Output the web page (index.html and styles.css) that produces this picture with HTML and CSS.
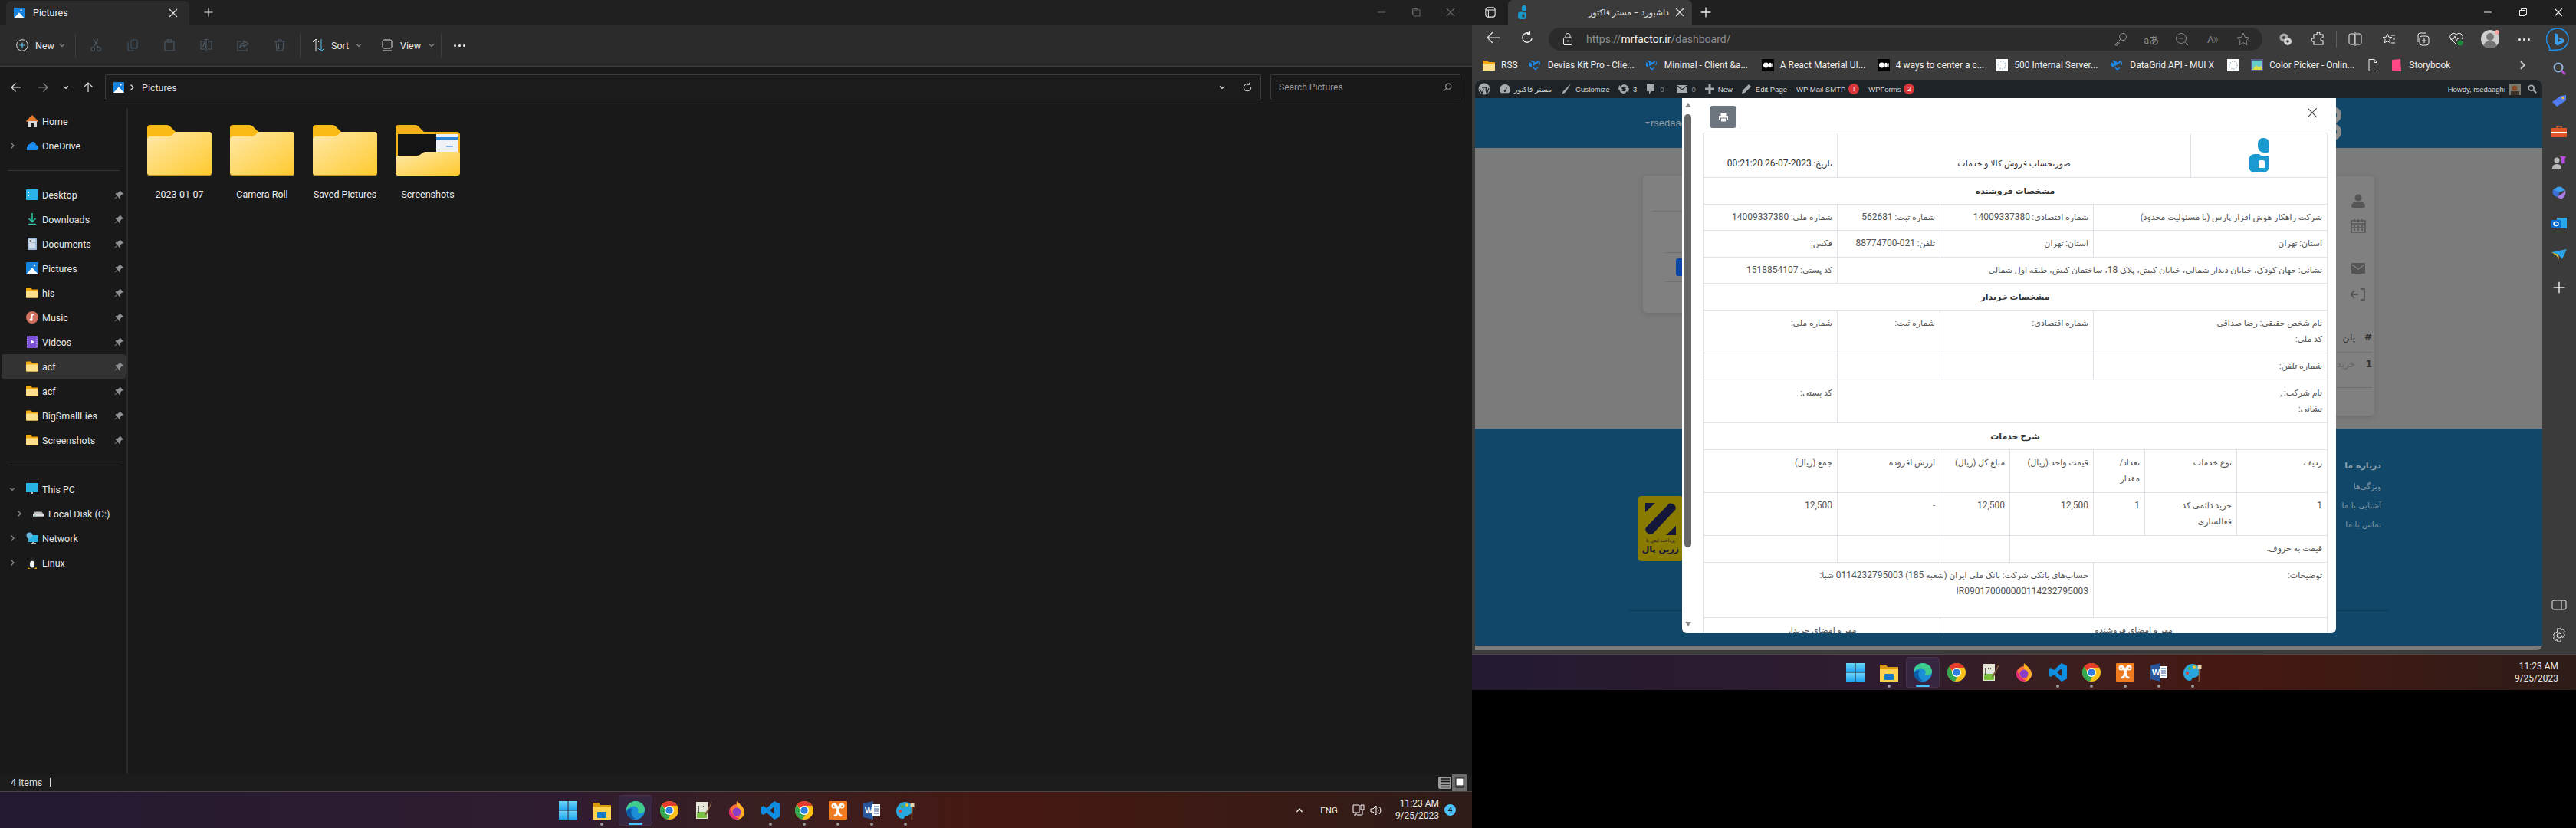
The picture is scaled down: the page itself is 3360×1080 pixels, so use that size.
FILE: index.html
```html
<!DOCTYPE html>
<html lang="en">
<head>
<meta charset="utf-8">
<title>Desktop</title>
<link rel="stylesheet" href="styles.css">
</head>
<body>
<svg class="defs" aria-hidden="true">
  <defs>
    <linearGradient id="gf" x1="0" y1="0" x2="1" y2="1"><stop offset="0" stop-color="#ffe9a8"/><stop offset="1" stop-color="#ffc92e"/></linearGradient>
    <linearGradient id="gs" x1="0" y1="0" x2="0" y2="1"><stop offset="0" stop-color="#6fd6fb"/><stop offset="1" stop-color="#1fa5ee"/></linearGradient>
    <symbol id="folderbig" viewBox="0 0 84 66">
      <path d="M4 0h21q3 0 5 2l7 7h43q4 0 4 4v49q0 4-4 4H4q-4 0-4-4V4q0-4 4-4z" fill="#fbbb17"/>
      <path d="M4 15h24q3 0 5-2l4-4h43q4 0 4 4v49q0 4-4 4H4q-4 0-4-4V19q0-4 4-4z" fill="url(#gf)"/>
      <path d="M0 63q0 3 4 3h76q4 0 4-3v-1q0 3-4 3H4q-4 0-4-3z" fill="#c8962a"/>
    </symbol>
    <symbol id="foldershot" viewBox="0 0 84 66">
      <path d="M4 0h21q3 0 5 2l7 7h43q4 0 4 4v49q0 4-4 4H4q-4 0-4-4V4q0-4 4-4z" fill="#f3b21a"/>
      <rect x="3" y="12" width="78" height="30" fill="#141414"/>
      <rect x="53" y="12" width="28" height="30" fill="#eef2f7"/>
      <rect x="53" y="16" width="28" height="3" fill="#2b88d8"/>
      <rect x="66" y="27" width="9" height="2" fill="#8fb4e0"/>
      <path d="M4 40h24q3 0 5-2l3-2q1-1 3-1h41q4 0 4 4v23q0 4-4 4H4q-4 0-4-4V44q0-4 4-4z" fill="url(#gf)"/>
    </symbol>
    <symbol id="foldersm" viewBox="0 0 16 13">
      <path d="M1 0h5l2 2h7q1 0 1 1v9q0 1-1 1H1q-1 0-1-1V1q0-1 1-1z" fill="#f2a90f"/>
      <path d="M0 4h16v8q0 1-1 1H1q-1 0-1-1z" fill="#ffe08a"/>
    </symbol>
    <symbol id="pic" viewBox="0 0 16 16">
      <rect width="16" height="16" rx="1" fill="#1583dd"/>
      <path d="M0 16L8 7l8 9z" fill="#fff"/><circle cx="11" cy="4" r="1.300" fill="#fff"/>
    </symbol>
    <symbol id="pin" viewBox="0 0 12 12">
      <path d="M7 0l5 5-1 1-1-.5L8 8l-.3 2-1 1-2.200-3L1 11.500 0.500 11 4 7.500 1.500 5l1-1 2-.2L7 1.500z" fill="#8a8f94"/>
    </symbol>
    <symbol id="chev" viewBox="0 0 10 10"><path d="M2 3.500l3 3 3-3" fill="none" stroke="currentColor" stroke-width="1.200"/></symbol>
    <symbol id="chr" viewBox="0 0 10 10"><path d="M3.500 1.500l3.500 3.500-3.500 3.500" fill="none" stroke="currentColor" stroke-width="1.300"/></symbol>
    <symbol id="x" viewBox="0 0 12 12"><path d="M1 1l10 10M11 1L1 11" stroke="currentColor" stroke-width="1.100"/></symbol>
    <symbol id="plus" viewBox="0 0 12 12"><path d="M6 .5v11M.5 6h11" stroke="currentColor" stroke-width="1.100"/></symbol>
    <symbol id="search" viewBox="0 0 14 14"><circle cx="8.500" cy="5.500" r="4.200" fill="none" stroke="currentColor" stroke-width="1.200"/><path d="M5.500 8.500L1 13" stroke="currentColor" stroke-width="1.300"/></symbol>
    <symbol id="refresh" viewBox="0 0 16 16"><path d="M13.500 8A5.500 5.500 0 1 1 11 3.400M11 .8v3h-3" fill="none" stroke="currentColor" stroke-width="1.200"/></symbol>
    <symbol id="start" viewBox="0 0 24 24"><rect width="11.500" height="11.500" fill="url(#gs)"/><rect x="12.500" width="11.500" height="11.500" fill="url(#gs)"/><rect y="12.500" width="11.500" height="11.500" fill="url(#gs)"/><rect x="12.500" y="12.500" width="11.500" height="11.500" fill="url(#gs)"/></symbol>
    <symbol id="texp" viewBox="0 0 24 24"><path d="M0 2h8l2 3h14v18H0z" fill="#d99a0f"/><path d="M0 7h24v17H0z" fill="#ffd24d"/><rect x="6" y="14" width="12" height="8" rx="1" fill="#1679c9"/></symbol>
    <symbol id="tedge" viewBox="0 0 24 24"><circle cx="12" cy="12" r="12" fill="#1a8fd8"/><path d="M0 12C0 5 5 0 12 0c7 0 12 5 12 11 0 3-3 5-6 5-2 0-3-1-3-2 1-1 1-3 0-4.500C13 7 10 6 7 7c-3 1-6 3-7 5z" fill="#3fcb8d"/><path d="M8 10c-3 3-2 10 4 13-6 1-11-3-12-9 1-3 4-5 8-4z" fill="#0c5aa6"/></symbol>
    <symbol id="tchrome" viewBox="0 0 24 24"><circle cx="12" cy="12" r="12" fill="#fbc116"/><path d="M12 0a12 12 0 0 1 10.400 6H12a6 6 0 0 0-5.600 3.800L2.600 4.500A12 12 0 0 1 12 0z" fill="#e33b2e"/><path d="M2.600 4.500l4.800 8.800a6 6 0 0 0 6 4.500L9.800 23.800A12 12 0 0 1 2.600 4.500z" fill="#2fa84f"/><circle cx="12" cy="12" r="6" fill="#fff"/><circle cx="12" cy="12" r="4.700" fill="#2f7de1"/></symbol>
    <symbol id="tnote" viewBox="0 0 24 24"><rect x="3" y="1" width="15" height="22" fill="#e6e6d8"/><rect x="4" y="14" width="13" height="8" fill="#7cc242"/><path d="M6 6v10M9 7h1M12 7h1" stroke="#333" stroke-width="1.500"/><path d="M23 1l-8 15-1 3 3-2 7-15z" fill="#7a5a3a"/></symbol>
    <symbol id="tfox" viewBox="0 0 24 24"><circle cx="12" cy="14" r="10" fill="#ff7139"/><path d="M12 0c3 3 9 7 10 14 0 6-5 10-10 10 5-2 6-8 3-12-2-3-4-6-3-12z" fill="#ffb020"/><circle cx="12" cy="14" r="5.500" fill="#8a3fc8"/><path d="M3 8c1 6 4 12 12 15-5 2-13-1-13-9z" fill="#e02878"/></symbol>
    <symbol id="tcode" viewBox="0 0 24 24"><path d="M17 0l7 3.500v17L17 24 7 15l-4 3-3-1.500v-9L3 6l4 3zM17 7l-6 5 6 5z" fill="#0f8de0"/></symbol>
    <symbol id="txampp" viewBox="0 0 24 24"><rect width="24" height="24" rx="1" fill="#f07a1e"/><path d="M7 6c3-3 4 3 5 6s2 9 5 6M17 6c-3-3-4 3-5 6s-2 9-5 6" fill="none" stroke="#fff" stroke-width="3"/><circle cx="7" cy="6" r="2.500" fill="none" stroke="#fff" stroke-width="2"/><circle cx="17" cy="6" r="2.500" fill="none" stroke="#fff" stroke-width="2"/></symbol>
    <symbol id="tpaint" viewBox="0 0 24 24"><path d="M12 1C5 1 0 7 0 13s4 10 8 10 2-4 5-4 8-2 8-8-4-10-9-10z" fill="#26a8de"/><circle cx="5" cy="13" r="2" fill="#d9442f"/><circle cx="8" cy="7" r="2" fill="#4cae3b"/><circle cx="14" cy="5" r="2" fill="#f1c232"/><path d="M20 4l2 .5L21 24h-1.500z" fill="#8a5a2a"/><rect x="18.500" y="3" width="5" height="5" fill="#e5d2a8"/></symbol>
    <symbol id="mui" viewBox="0 0 16 16"><path d="M0 2l4 2.500v5L8 7l4-2.500V2L8 4.500 4 2zM0 4v5l3 2V6zM14 2v5l-2 1.500zM11 9v3l-3 2.500-3-2v-2l3 2 3-2z" fill="#1e88e5"/></symbol>
    <symbol id="med" viewBox="0 0 16 16"><rect width="16" height="16" rx="1" fill="#000"/><circle cx="5.500" cy="8" r="3.500" fill="#fff"/><ellipse cx="11" cy="8" rx="1.800" ry="3.300" fill="#fff"/><ellipse cx="14" cy="8" rx=".7" ry="3" fill="#fff"/></symbol>
    <symbol id="spin" viewBox="0 0 16 16"><rect width="16" height="16" fill="#fff"/><circle cx="8" cy="8" r="5" fill="none" stroke="#a9c4d6" stroke-width="1.500" stroke-dasharray="1.500 1.500"/></symbol>
    <symbol id="logo" viewBox="0 0 27 45"><path d="M20 0a7 7 0 0 1 7 7v9a3 3 0 0 1-3 3h-4a8 8 0 0 1-8-8V7a7 7 0 0 1 8-7z" fill="#1b9ad2"/><path fill-rule="evenodd" d="M8 21h5a4 4 0 0 1 3 2h8a3 3 0 0 1 3 3v11a8 8 0 0 1-8 8H8a8 8 0 0 1-8-8V29a8 8 0 0 1 8-8zM15 29a2 2 0 0 0-2 2v8h8v-8a2 2 0 0 0-2-2z" fill="#1b9ad2"/></symbol>
  </defs>
</svg>

<div class="screen">

  <!-- ============ LEFT MONITOR ============ -->
  <section class="monitor mon-left">
    <div class="explorer">
      <header class="ex-title">
        <div class="ex-tab">
          <svg class="i14"><use href="#pic"/></svg>
          <span class="ex-tab-name">Pictures</span>
          <svg class="i12 ml-auto"><use href="#x"/></svg>
        </div>
        <svg class="i12 ex-newtab"><use href="#plus"/></svg>
        <div class="winctl winctl-dim">
          <svg class="i12" viewBox="0 0 12 12"><path d="M1 6h10" stroke="currentColor"/></svg>
          <svg class="i12" viewBox="0 0 12 12"><path d="M3 3h8v8H3zM1.500 9V1.500H9" fill="none" stroke="currentColor"/></svg>
          <svg class="i12"><use href="#x"/></svg>
        </div>
      </header>

      <div class="ex-tools">
        <div class="tool tool-new">
          <svg class="i16" viewBox="0 0 16 16"><circle cx="8" cy="8" r="7.300" fill="none" stroke="#ddd"/><path d="M8 4.500v7M4.500 8h7" stroke="#5cc4f5" stroke-width="1.200"/></svg>
          <span>New</span><svg class="i10 dim"><use href="#chev"/></svg>
        </div>
        <i class="tool-sep"></i>
        <div class="tool-icons">
          <svg class="i16" viewBox="0 0 16 16"><g fill="none" stroke="#4c5b68" stroke-width="1.100"><circle cx="4" cy="13" r="2.500"/><circle cx="12" cy="13" r="2.500"/><path d="M5 11L11 0M11 11L5 0"/></g></svg>
          <svg class="i16" viewBox="0 0 16 16"><g fill="none" stroke="#3f5668" stroke-width="1.100"><rect x="6" y="1" width="8" height="11" rx="2"/><path d="M3 5H2v9q0 1 1 1h6v-1"/></g></svg>
          <svg class="i16" viewBox="0 0 16 16"><g fill="none" stroke="#4c5b68" stroke-width="1.100"><path d="M4 3H2v12h12V3h-2"/><rect x="5" y="1" width="6" height="3"/></g></svg>
          <svg class="i16" viewBox="0 0 16 16"><g fill="none" stroke="#4c5b68" stroke-width="1.100"><path d="M6 3H1v10h5M10 3h5v10h-5M8 0v16M5.500 .5h5M5.500 15.500h5M3.500 10l2-5 2 5"/></g></svg>
          <svg class="i16" viewBox="0 0 16 16"><g fill="none" stroke="#4c5b68" stroke-width="1.100"><path d="M6 3H1v12h12v-3"/><path d="M9 2l6 4-6 4V8Q5 8 4 12 4 5 9 5z"/></g></svg>
          <svg class="i16" viewBox="0 0 16 16"><g fill="none" stroke="#4c5b68" stroke-width="1.100"><path d="M1 3h14M6 3V1h4v2M3 3l1 12h8l1-12M6.500 6v7M9.500 6v7"/></g></svg>
        </div>
        <i class="tool-sep"></i>
        <div class="tool tool-sort">
          <svg class="i17" viewBox="0 0 17 18"><path d="M5 17V1M1 5l4-4 4 4" fill="none" stroke="#ddd"/><path d="M12 1v16M8 13l4 4 4-4" fill="none" stroke="#5cc4f5"/></svg>
          <span>Sort</span><svg class="i10 dim"><use href="#chev"/></svg>
        </div>
        <div class="tool tool-view">
          <svg class="i16" viewBox="0 0 16 16"><rect x="2" y="1" width="12" height="11" rx="2" fill="none" stroke="#ddd"/><path d="M2 15h12" stroke="#ddd"/></svg>
          <span>View</span><svg class="i10 dim"><use href="#chev"/></svg>
        </div>
        <i class="tool-sep"></i>
        <div class="tool-more"><i></i><i></i><i></i></div>
      </div>

      <div class="ex-addr">
        <div class="ex-nav">
          <svg class="i14" viewBox="0 0 14 14"><path d="M13 7H1M6.500 1.500L1 7l5.500 5.500" fill="none" stroke="#ddd" stroke-width="1.200"/></svg>
          <svg class="i14 dim" viewBox="0 0 14 14"><path d="M1 7h12M7.500 1.500L13 7l-5.500 5.500" fill="none" stroke="currentColor" stroke-width="1.200"/></svg>
          <svg class="i10"><use href="#chev"/></svg>
          <svg class="i14" viewBox="0 0 14 14"><path d="M7 13V1M1.500 6.500L7 1l5.500 5.500" fill="none" stroke="#ddd" stroke-width="1.200"/></svg>
        </div>
        <div class="ex-path">
          <svg class="i14"><use href="#pic"/></svg>
          <svg class="i10"><use href="#chr"/></svg>
          <span>Pictures</span>
          <svg class="i10 ml-auto"><use href="#chev"/></svg>
          <svg class="i14 path-refresh"><use href="#refresh"/></svg>
        </div>
        <div class="ex-search">
          <span>Search Pictures</span>
          <svg class="i12 ml-auto"><use href="#search"/></svg>
        </div>
      </div>

      <div class="ex-body">
        <nav class="ex-side">
          <div class="nv"><span class="nv-chev"></span>
            <svg class="nv-ic" viewBox="0 0 16 16"><path d="M8 0l8 8-1 1H1L0 8z" fill="#e8782a"/><path d="M2 8h12v8h-4v-5H6v5H2z" fill="#d8d8d8"/></svg><span>Home</span></div>
          <div class="nv"><span class="nv-chev"><svg class="i10 dim"><use href="#chr"/></svg></span>
            <svg class="nv-ic" viewBox="0 0 16 16"><path d="M1 14q-1-3 1-5 0-3 3-3 1-3 4-3t4 4q3 1 3 4t-3 3z" fill="#1a8cf0"/></svg><span>OneDrive</span></div>
          <hr class="nv-sep">
          <div class="nv"><span class="nv-chev"></span>
            <svg class="nv-ic" viewBox="0 0 16 16"><rect y="1" width="16" height="14" rx="1" fill="#2ab3e8"/><path d="M2 4h2v2H2zM2 8h2v2H2z" fill="#fff"/></svg><span>Desktop</span><svg class="nv-pin"><use href="#pin"/></svg></div>
          <div class="nv"><span class="nv-chev"></span>
            <svg class="nv-ic" viewBox="0 0 16 16"><path d="M8 0v11M3.500 7L8 11.500 12.500 7" fill="none" stroke="#2cc7a8" stroke-width="1.500"/><path d="M3 14.500h10" stroke="#2cc7a8" stroke-width="1.500"/></svg><span>Downloads</span><svg class="nv-pin"><use href="#pin"/></svg></div>
          <div class="nv"><span class="nv-chev"></span>
            <svg class="nv-ic" viewBox="0 0 16 16"><rect x="2" width="12" height="16" rx="1" fill="#a5bcd6"/><path d="M4 3h3v3H4zM8 3h4M8 5h4M4 8h8M4 10h8M4 12h8" stroke="#fff"/></svg><span>Documents</span><svg class="nv-pin"><use href="#pin"/></svg></div>
          <div class="nv"><span class="nv-chev"></span><svg class="nv-ic"><use href="#pic"/></svg><span>Pictures</span><svg class="nv-pin"><use href="#pin"/></svg></div>
          <div class="nv"><span class="nv-chev"></span><svg class="nv-ic"><use href="#foldersm"/></svg><span>his</span><svg class="nv-pin"><use href="#pin"/></svg></div>
          <div class="nv"><span class="nv-chev"></span>
            <svg class="nv-ic" viewBox="0 0 16 16"><circle cx="8" cy="8" r="8" fill="#d2705f"/><path d="M7 11V4l4-1v2L8.500 5.600V11a2 1.600 0 1 1-1.500-1.500z" fill="#fff"/></svg><span>Music</span><svg class="nv-pin"><use href="#pin"/></svg></div>
          <div class="nv"><span class="nv-chev"></span>
            <svg class="nv-ic" viewBox="0 0 16 16"><rect x="1" width="14" height="16" fill="#7b4fd6"/><path d="M6 5l5 3-5 3z" fill="#fff"/><path d="M2 1v14M14 1v14" stroke="#d5c6f5" stroke-dasharray="1.500 1.500"/></svg><span>Videos</span><svg class="nv-pin"><use href="#pin"/></svg></div>
          <div class="nv nv-on"><span class="nv-chev"></span><svg class="nv-ic"><use href="#foldersm"/></svg><span>acf</span><svg class="nv-pin"><use href="#pin"/></svg></div>
          <div class="nv"><span class="nv-chev"></span><svg class="nv-ic"><use href="#foldersm"/></svg><span>acf</span><svg class="nv-pin"><use href="#pin"/></svg></div>
          <div class="nv"><span class="nv-chev"></span><svg class="nv-ic"><use href="#foldersm"/></svg><span>BigSmallLies</span><svg class="nv-pin"><use href="#pin"/></svg></div>
          <div class="nv"><span class="nv-chev"></span><svg class="nv-ic"><use href="#foldersm"/></svg><span>Screenshots</span><svg class="nv-pin"><use href="#pin"/></svg></div>
          <hr class="nv-sep">
          <div class="nv"><span class="nv-chev"><svg class="i10 dim"><use href="#chev"/></svg></span>
            <svg class="nv-ic" viewBox="0 0 16 16"><rect width="16" height="12" fill="#27b3e3"/><path d="M7 12h2v2h3v1H4v-1h3z" fill="#bbb"/></svg><span>This PC</span></div>
          <div class="nv nv-sub"><span class="nv-chev"><svg class="i10 dim"><use href="#chr"/></svg></span>
            <svg class="nv-ic" viewBox="0 0 16 16"><path d="M3 5h10l3 4v3H0V9z" fill="#bdbdbd"/><rect y="9" width="16" height="3" fill="#e0e0e0"/><rect x="2" y="10" width="2" height="1" fill="#3c9"/></svg><span>Local Disk (C:)</span></div>
          <div class="nv"><span class="nv-chev"><svg class="i10 dim"><use href="#chr"/></svg></span>
            <svg class="nv-ic" viewBox="0 0 16 16"><rect x="3" y="4" width="13" height="9" fill="#27b3e3"/><path d="M8 13h3v1h2v1H6v-1h2z" fill="#bbb"/><circle cx="4.500" cy="4.500" r="4" fill="#6bb4dc"/></svg><span>Network</span></div>
          <div class="nv"><span class="nv-chev"><svg class="i10 dim"><use href="#chr"/></svg></span>
            <svg class="nv-ic" viewBox="0 0 16 16"><ellipse cx="8" cy="9" rx="4.500" ry="6" fill="#222"/><ellipse cx="8" cy="10" rx="3" ry="4.500" fill="#f4f4f4"/><circle cx="8" cy="3" r="2.500" fill="#222"/><path d="M2 14l4 2H2zM14 14l-4 2h4z" fill="#eea80f"/></svg><span>Linux</span></div>
        </nav>
        <main class="ex-files">
          <figure class="file"><svg class="folder"><use href="#folderbig"/></svg><figcaption>2023-01-07</figcaption></figure>
          <figure class="file"><svg class="folder"><use href="#folderbig"/></svg><figcaption>Camera Roll</figcaption></figure>
          <figure class="file"><svg class="folder"><use href="#folderbig"/></svg><figcaption>Saved Pictures</figcaption></figure>
          <figure class="file"><svg class="folder"><use href="#foldershot"/></svg><figcaption>Screenshots</figcaption></figure>
        </main>
      </div>

      <footer class="ex-status">
        <span>4 items</span><i class="status-bar"></i>
        <div class="view-toggle">
          <span class="vt"><svg class="i14" viewBox="0 0 14 14"><path d="M1 2h12M1 5.500h12M1 9h12M1 12.500h12" stroke="#111" stroke-width="1.400"/></svg></span>
          <span class="vt vt-on"><svg class="i14" viewBox="0 0 14 14"><rect x="2" y="1" width="10" height="10" fill="#fff" stroke="#111"/><path d="M2 13h10" stroke="#111"/></svg></span>
        </div>
      </footer>
    </div>

    <div class="taskbar tb-left">
      <div class="tb-apps">
        <span class="app"><svg class="i24"><use href="#start"/></svg></span>
        <span class="app run"><svg class="i24"><use href="#texp"/></svg></span>
        <span class="app active"><svg class="i24"><use href="#tedge"/></svg></span>
        <span class="app"><svg class="i24"><use href="#tchrome"/></svg></span>
        <span class="app"><svg class="i24"><use href="#tnote"/></svg></span>
        <span class="app"><svg class="i24"><use href="#tfox"/></svg></span>
        <span class="app run"><svg class="i24"><use href="#tcode"/></svg></span>
        <span class="app run"><svg class="i24"><use href="#tchrome"/></svg></span>
        <span class="app run"><svg class="i24"><use href="#txampp"/></svg></span>
        <span class="app run"><svg class="i24" viewBox="0 0 24 24"><path d="M1 3l13-3v24L1 21z" fill="#2b579a"/><rect x="13" y="4" width="10" height="16" fill="#fff"/><path d="M15 7h6M15 10h6M15 13h6M15 16h6" stroke="#2b579a"/><text x="3" y="16" class="word-w">W</text></svg></span>
        <span class="app run"><svg class="i24"><use href="#tpaint"/></svg></span>
      </div>
      <div class="tray">
        <svg class="i10 tray-up" viewBox="0 0 10 10"><path d="M1.500 7L5 3l3.500 4" fill="none" stroke="#fff" stroke-width="1.200"/></svg>
        <span class="tray-lang">ENG</span>
        <svg class="i16" viewBox="0 0 16 16"><path d="M1 1h8v10H1zM5 11v3H2M11 1h4v6h-4zM13 7v7H6" fill="none" stroke="#fff"/></svg>
        <svg class="i16 tray-vol" viewBox="0 0 16 16"><path d="M1 6h3l4-4v12l-4-4H1zM10 5q2 3 0 6M12 3q4 5 0 10" fill="none" stroke="#fff"/></svg>
        <div class="clock"><span>11:23 AM</span><span>9/25/2023</span></div>
        <span class="notif">4</span>
      </div>
    </div>
  </section>

  <!-- ============ RIGHT MONITOR ============ -->
  <section class="monitor mon-right">
    <div class="edge">
      <header class="ed-title">
        <svg class="i14 ed-tabs" viewBox="0 0 16 16"><rect x="1" y="1" width="14" height="14" rx="3" fill="none" stroke="#eee" stroke-width="1.200"/><path d="M1 4.500h14M5 4.500V15" stroke="#eee" stroke-width="1.200"/></svg>
        <div class="ed-tab">
          <svg class="ed-fav" viewBox="0 0 27 45"><use href="#logo"/></svg>
          <span class="ed-tab-name" dir="rtl">داشبورد – مستر فاکتور</span>
          <svg class="i12"><use href="#x"/></svg>
        </div>
        <svg class="i14 ed-new"><use href="#plus"/></svg>
        <div class="winctl">
          <svg class="i12" viewBox="0 0 12 12"><path d="M1 6h10" stroke="currentColor"/></svg>
          <svg class="i12" viewBox="0 0 12 12"><path d="M1.500 3.500h7v7h-7zM3.500 3.500v-2h7v7h-2" fill="none" stroke="currentColor"/></svg>
          <svg class="i12"><use href="#x"/></svg>
        </div>
      </header>

      <div class="ed-tools">
        <svg class="i18" viewBox="0 0 18 18"><path d="M17 9H1M8 2L1 9l7 7" fill="none" stroke="#eee" stroke-width="1.100"/></svg>
        <svg class="i18 ed-reload"><use href="#refresh"/></svg>
        <div class="ed-pill">
          <svg class="ed-lock" viewBox="0 0 12 16"><rect x=".5" y="6" width="11" height="9.500" rx="1.500" fill="none" stroke="#eee"/><path d="M3 6V3.500a3 3 0 0 1 6 0V6" fill="none" stroke="#eee"/><circle cx="6" cy="10.500" r="1" fill="#eee"/></svg>
          <span class="ed-url">https://<b>mrfactor.ir</b>/dashboard/</span>
          <div class="pill-icons">
            <span class="cell"><svg class="i18" viewBox="0 0 18 18"><circle cx="12" cy="6" r="4.500" fill="none" stroke="#8a8a8a"/><path d="M9 9l-7 7v1h3v-2h2v-2" fill="none" stroke="#8a8a8a"/></svg></span>
            <span class="cell pill-tr">aあ</span>
            <span class="cell"><svg class="i18" viewBox="0 0 18 18"><circle cx="8" cy="8" r="6.500" fill="none" stroke="#8a8a8a"/><path d="M5 8h6M13 13l4 4" stroke="#8a8a8a"/></svg></span>
            <span class="cell pill-tr">A<small>))</small></span>
            <span class="cell"><svg class="i18" viewBox="0 0 18 18"><path d="M9 1l2.400 5.400 5.600.6-4.200 3.800 1.200 5.700L9 13.600 4 16.500l1.200-5.700L1 7l5.600-.6z" fill="none" stroke="#8a8a8a"/></svg></span>
          </div>
        </div>
        <div class="ed-ext">
          <span class="cell"><svg class="i18" viewBox="0 0 18 18"><circle cx="7" cy="7" r="5.500" fill="#a8a8a8"/><circle cx="12" cy="12" r="5" fill="#d0d0d0"/><circle cx="7" cy="7" r="2" fill="#3b3b3b"/><circle cx="12" cy="12" r="1.800" fill="#3b3b3b"/></svg></span>
          <span class="cell cell-n"><svg class="i18" viewBox="0 0 18 18"><path d="M7 2a2 2 0 0 1 4 0v1h4v4h-1a2 2 0 0 0 0 4h1v5H3v-4H2a2 2 0 0 1 0-4h1V3h4z" fill="none" stroke="#eee" stroke-width="1.100"/></svg></span>
          <i class="ext-sep"></i>
          <span class="cell"><svg class="i18" viewBox="0 0 18 18"><path d="M8 2H3q-2 0-2 2v10q0 2 2 2h5zM10 2h5q2 0 2 2v10q0 2-2 2h-5M9 0v18" fill="none" stroke="#eee"/></svg></span>
          <span class="cell"><svg class="i18" viewBox="0 0 18 18"><path d="M7 2l1.800 4.200 4.200.4-3.200 2.900.9 4.300L7 11.600 3.300 13.800l.9-4.300L1 6.600l4.200-.4z" fill="none" stroke="#eee"/><path d="M12 4h5M14 9h3M12 14h5" stroke="#eee"/></svg></span>
          <span class="cell"><svg class="i18" viewBox="0 0 18 18"><rect x="5" y="5" width="12" height="12" rx="3" fill="none" stroke="#eee"/><path d="M11 8v6M8 11h6M3 13V4q0-3 3-3h7" fill="none" stroke="#eee"/></svg></span>
          <span class="cell"><svg class="i18" viewBox="0 0 18 18"><path d="M9 16L2 9Q-1 5 3 2q3-2 6 1 3-3 6-1 4 3 1 7" fill="none" stroke="#eee"/><path d="M1 9h4l2-4 2 6 2-3h2" fill="none" stroke="#eee"/><circle cx="14" cy="14" r="3.500" fill="#1f8a3b"/></svg></span>
          <span class="cell profile"><svg class="i24" viewBox="0 0 24 24"><circle cx="12" cy="12" r="12" fill="#cfcfcf"/><circle cx="12" cy="9" r="5" fill="#777"/><path d="M3 21q2-7 9-7t9 7q-4 3-9 3t-9-3z" fill="#777"/><circle cx="21" cy="3" r="3" fill="#f7a6a0"/></svg></span>
          <span class="cell tool-more edm"><i></i><i></i><i></i></span>
          <span class="cell"><svg class="bing" viewBox="0 0 30 30"><path d="M15 1a14 14 0 0 1 0 28c-3 0-6 0-11 1 2-2 1-4-1-7A14 14 0 0 1 15 1z" fill="none" stroke="#1f8fe8" stroke-width="1.500"/><path d="M11 7l4 1.500v11l5-3-3-1-1-3 8 3v3l-9 5-4-3z" fill="#3aa0ee"/></svg></span>
        </div>
      </div>

      <div class="ed-marks">
        <span class="bm"><svg class="i16f"><use href="#foldersm"/></svg><span>RSS</span></span>
        <span class="bm"><svg class="i16"><use href="#mui"/></svg><span class="bm-t">Devias Kit Pro - Clie...</span></span>
        <span class="bm"><svg class="i16"><use href="#mui"/></svg><span class="bm-t">Minimal - Client &amp;a...</span></span>
        <span class="bm"><svg class="i16"><use href="#med"/></svg><span class="bm-t">A React Material UI...</span></span>
        <span class="bm"><svg class="i16"><use href="#med"/></svg><span class="bm-t">4 ways to center a c...</span></span>
        <span class="bm"><svg class="i16"><use href="#spin"/></svg><span class="bm-t">500 Internal Server...</span></span>
        <span class="bm"><svg class="i16"><use href="#mui"/></svg><span class="bm-t">DataGrid API - MUI X</span></span>
        <span class="bm"><svg class="i16"><use href="#spin"/></svg></span>
        <span class="bm"><svg class="i16" viewBox="0 0 16 16"><rect width="16" height="16" fill="#5a5a8a"/><rect x="2" y="2" width="12" height="12" fill="#6cc"/><path d="M2 14l5-6 3 3 4-2v5z" fill="#dd4"/></svg><span class="bm-t">Color Picker - Onlin...</span></span>
        <span class="bm"><svg class="i16" viewBox="0 0 16 16"><path d="M3 .5h7l3.500 4V15.500H3zM10 .5v4h3.500" fill="none" stroke="#eee"/></svg></span>
        <span class="bm"><svg class="i16" viewBox="0 0 16 16"><path d="M2 1l11-1 1 16-12-1z" fill="#ff4785"/></svg><span>Storybook</span></span>
        <svg class="i14 bm-more"><use href="#chr"/></svg>
      </div>

      <div class="ed-main">
        <div class="page">
          <div class="wpbar">
            <svg class="i16" viewBox="0 0 16 16"><circle cx="8" cy="8" r="7.500" fill="#a7aaad"/><path d="M2 8l3 6 2-5-1-3h5l-1 3 1.500 5L14 7" fill="none" stroke="#1d2327" stroke-width="1.300"/></svg>
            <svg class="i14 wp-gap1" viewBox="0 0 16 16"><path d="M8 1a8 8 0 0 0-6 13h12A8 8 0 0 0 8 1z" fill="#a7aaad"/><circle cx="8" cy="11" r="1.500" fill="#1d2327"/><path d="M8 11l3-5" stroke="#1d2327"/></svg>
            <span class="wp-site" dir="rtl">مستر فاکتور</span>
            <svg class="i14 wp-gap2" viewBox="0 0 14 14"><path d="M13 0L5 8 3 10 1 14l4-2 2-2z" fill="#a7aaad"/></svg>
            <span class="wp-t">Customize</span>
            <svg class="i14 wp-gap3" viewBox="0 0 14 14"><path d="M7 1a6 6 0 0 1 6 6h-3a3 3 0 0 0-6-.5L6 8H0L1 2l2 2A6 6 0 0 1 7 1zM7 13a6 6 0 0 1-6-6h3a3 3 0 0 0 6 .5L8 6h6l-1 6-2-2a6 6 0 0 1-4 3z" fill="#a7aaad"/></svg>
            <span class="wp-n">3</span>
            <svg class="i14 wp-gap4" viewBox="0 0 14 14"><path d="M2 1h10v9H8l-3 4v-4H2z" fill="#a7aaad"/></svg>
            <span class="wp-dim">0</span>
            <svg class="i14 wp-gap5" viewBox="0 0 14 14"><rect y="2" width="14" height="10" rx="1" fill="#a7aaad"/><path d="M1 3l6 5 6-5" fill="none" stroke="#1d2327" stroke-width="1.200"/></svg>
            <span class="wp-dim">0</span>
            <svg class="i12 wp-gap6" viewBox="0 0 12 12"><path d="M6 0v12M0 6h12" stroke="#a7aaad" stroke-width="3"/></svg>
            <span class="wp-t">New</span>
            <svg class="i14 wp-gap7" viewBox="0 0 14 14"><path d="M10 1l3 3-8 8-4 1 1-4z" fill="#a7aaad"/></svg>
            <span class="wp-t">Edit Page</span>
            <span class="wp-t wp-gap8">WP Mail SMTP</span>
            <span class="wp-badge">!</span>
            <span class="wp-t wp-gap9">WPForms</span>
            <span class="wp-badge">2</span>
            <span class="wp-t wp-howdy">Howdy, rsedaaghi</span>
            <svg class="wp-av" viewBox="0 0 15 15"><rect width="15" height="15" fill="#7a7a70"/><circle cx="7" cy="6" r="3.500" fill="#8a4a2a"/><rect x="2" y="10" width="11" height="5" fill="#3a3028"/></svg>
            <svg class="i12 wp-search" viewBox="0 0 14 14"><circle cx="5.500" cy="5.500" r="4" fill="none" stroke="#a7aaad" stroke-width="2"/><path d="M8.500 8.500L13 13" stroke="#a7aaad" stroke-width="2.500"/></svg>
          </div>

          <div class="site-head">
            <span class="site-user"><i class="caret"></i>rsedaaghi</span>
            <svg class="site-logo" viewBox="0 0 16 44"><g fill="none" stroke="#8c8c8c" stroke-width="6"><circle cx="3" cy="11" r="8"/><circle cx="3" cy="33" r="8"/></g></svg>
          </div>

          <div class="site-main">
            <div class="card card-a">
              <hr class="ln ln-1">
              <hr class="ln ln-2">
              <span class="ghost-btn"></span>
              <hr class="ln ln-2 ln-3">
            </div>
            <div class="card card-b">
              <svg class="ci" viewBox="0 0 20 20"><circle cx="10" cy="6" r="4.500" fill="#555"/><path d="M1 17q0-6 9-6t9 6q0 2-2 2H3q-2 0-2-2z" fill="#555"/></svg>
              <svg class="ci ci-cal" viewBox="0 0 20 20"><rect x="1" y="3" width="18" height="15" fill="none" stroke="#555" stroke-width="1.500"/><path d="M1 7h18M5 1v4M10 1v4M15 1v4M5 9v7M10 9v7M15 9v7M2 12h16" stroke="#555" stroke-width="1.500"/></svg>
              <svg class="ci ci-mail" viewBox="0 0 20 20"><rect x="1" y="3" width="18" height="14" rx="1" fill="#555"/><path d="M2 5l8 6 8-6" fill="none" stroke="#7f7f7f" stroke-width="1.500"/></svg>
              <svg class="ci ci-out" viewBox="0 0 20 20"><path d="M10 10H1M5 5l-5 5 5 5M13 3h5v14h-5" fill="none" stroke="#555" stroke-width="1.800"/></svg>
              <div class="cb-row cb-head" dir="rtl"><b>#</b><span>پلن</span></div>
              <hr class="cb-ln">
              <div class="cb-row cb-val" dir="rtl"><b>1</b><span>خرید</span></div>
              <hr class="cb-ln cb-ln2">
            </div>
          </div>

          <div class="site-foot">
            <div class="foot-row">
              <div class="zarin">
                <svg class="zarin-mark" viewBox="0 0 40 42"><path d="M0 0h13L0 12zM40 42H27l13-12z" fill="#14163a"/><path d="M31 1c5-2 11 4 8 8L10 40c-5 3-12-3-9-8z" fill="#14163a"/></svg>
                <span class="zarin-s" dir="rtl">پرداخت ایمن با</span>
                <span class="zarin-b" dir="rtl">زرین پال</span>
              </div>
              <div class="foot-links" dir="rtl">
                <strong>درباره ما</strong>
                <span>ویژگی‌ها</span>
                <span>آشنایی با ما</span>
                <span>تماس با ما</span>
              </div>
            </div>
            <hr class="foot-ln">
          </div>
          <div class="page-end"></div>

          <!-- invoice modal -->
          <div class="modal">
            <div class="mscroll">
              <i class="ms-up"></i><i class="ms-thumb"></i><i class="ms-down"></i>
            </div>
            <div class="mtop">
              <span class="printbtn"><svg class="i14" viewBox="0 0 14 14"><path d="M3.500 5V1h7v4M3.500 10H1V5h12v5h-2.500" fill="#fff"/><rect x="3.500" y="8" width="7" height="5" fill="#fff" stroke="#6c757d"/></svg></span>
              <svg class="mclose"><use href="#x"/></svg>
            </div>
            <table class="inv" dir="rtl">
              <colgroup><col class="c1"><col class="c2"><col class="c3"><col class="c4"><col class="c5"><col class="c6"><col class="c7"><col class="c8"></colgroup>
              <tr class="r58">
                <td colspan="2" class="inv-logo"><svg class="inv-mark" viewBox="0 0 27 45"><use href="#logo"/></svg></td>
                <td colspan="5" class="ctr bot dark">صورتحساب فروش کالا و خدمات</td>
                <td class="bot dark">تاریخ: <span class="num">2023-07-26 00:21:20</span></td>
              </tr>
              <tr class="r35"><th colspan="8">مشخصات فروشنده</th></tr>
              <tr class="r34">
                <td colspan="4">شرکت راهکار هوش افزار پارس (با مسئولیت محدود)</td>
                <td colspan="2">شماره اقتصادی: <span class="num">14009337380</span></td>
                <td>شماره ثبت: <span class="num">562681</span></td>
                <td>شماره ملی: <span class="num">14009337380</span></td>
              </tr>
              <tr class="r35">
                <td colspan="4">استان: تهران</td>
                <td colspan="2">استان: تهران</td>
                <td>تلفن: <span class="num">021-88774700</span></td>
                <td>فکس:</td>
              </tr>
              <tr class="r34">
                <td colspan="7">نشانی: جهان کودک، خیابان دیدار شمالی، خیابان کیش، پلاک <span class="num">18</span>، ساختمان کیش، طبقه اول شمالی</td>
                <td>کد پستی: <span class="num">1518854107</span></td>
              </tr>
              <tr class="r35"><th colspan="8">مشخصات خریدار</th></tr>
              <tr class="r56">
                <td colspan="4">نام شخص حقیقی: رضا صداقی<br>کد ملی:</td>
                <td colspan="2">شماره اقتصادی:</td>
                <td>شماره ثبت:</td>
                <td>شماره ملی:</td>
              </tr>
              <tr class="r35">
                <td colspan="4">شماره تلفن:</td>
                <td colspan="2"></td><td></td><td></td>
              </tr>
              <tr class="r56">
                <td colspan="7">نام شرکت: ,<br>نشانی:</td>
                <td>کد پستی:</td>
              </tr>
              <tr class="r35"><th colspan="8">شرح خدمات</th></tr>
              <tr class="r56">
                <td>ردیف</td>
                <td colspan="2">نوع خدمات</td>
                <td>تعداد/<br>مقدار</td>
                <td>قیمت واحد (ریال)</td>
                <td>مبلغ کل (ریال)</td>
                <td>ارزش افزوده</td>
                <td>جمع (ریال)</td>
              </tr>
              <tr class="r56">
                <td><span class="num">1</span></td>
                <td colspan="2">خرید دائمی کد<br>فعالسازی</td>
                <td><span class="num">1</span></td>
                <td><span class="num">12,500</span></td>
                <td><span class="num">12,500</span></td>
                <td>-</td>
                <td><span class="num">12,500</span></td>
              </tr>
              <tr class="r35">
                <td colspan="5">قیمت به حروف:</td>
                <td></td><td></td><td></td>
              </tr>
              <tr class="r72">
                <td colspan="4">توضیحات:</td>
                <td colspan="4">حساب‌های بانکی شرکت: بانک ملی ایران (شعبه <span class="num">185</span>) <span class="num">0114232795003</span> شبا:<br><span class="num">IR090170000000114232795003</span></td>
              </tr>
              <tr class="r35">
                <td colspan="6" class="ctr">مهر و امضای فروشنده</td>
                <td colspan="2" class="ctr">مهر و امضای خریدار</td>
              </tr>
            </table>
          </div>
        </div>

        <aside class="ed-side">
          <svg class="i18 side-top" viewBox="0 0 18 18"><circle cx="8" cy="8" r="5.500" fill="none" stroke="#8fb3d9" stroke-width="2"/><path d="M12 12l5 5" stroke="#c04fd8" stroke-width="2.500"/></svg>
          <svg class="side-i" viewBox="0 0 20 20"><path d="M1 11L12 3l7-1v7L7 17z" fill="#4f7cf0"/><circle cx="15" cy="5.500" r="1.800" fill="#f0c040"/></svg>
          <svg class="side-i" viewBox="0 0 20 20"><path d="M7 5V3h6v2" fill="none" stroke="#d8602a" stroke-width="1.500"/><rect y="5" width="20" height="12" rx="1" fill="#e0562a"/><rect y="10" width="20" height="1.500" fill="#fff"/></svg>
          <svg class="side-i" viewBox="0 0 20 20"><circle cx="7" cy="7" r="3.500" fill="#bbb"/><path d="M1 18q0-6 6-6t6 6z" fill="#bbb"/><path d="M11 2h8l-1.500 3v6H13V5z" fill="#b44fe0"/></svg>
          <svg class="side-i" viewBox="0 0 20 20"><path d="M2 6q6-6 11-4l5 4-8 3z" fill="#3aa0ee"/><path d="M18 6q2 7-5 12l-6-3 8-5z" fill="#a87fe8"/><path d="M2 6q-2 7 5 9l3-3V8z" fill="#3d6fd8"/></svg>
          <svg class="side-i" viewBox="0 0 20 20"><rect x="7" y="2" width="13" height="14" fill="#28a8ea"/><rect y="5" width="12" height="10" rx="1" fill="#0a6ccc"/><ellipse cx="6" cy="10" rx="3" ry="2.500" fill="none" stroke="#fff" stroke-width="1.500"/></svg>
          <svg class="side-i" viewBox="0 0 20 20"><path d="M0 7l20-4-6 13-5-6z" fill="#2aa5e8"/><path d="M0 7l9 3 1 6-4-5z" fill="#f0c030"/></svg>
          <svg class="side-i side-plus"><use href="#plus"/></svg>
          <hr class="side-sep">
          <svg class="side-i" viewBox="0 0 20 20"><rect x="1" y="4" width="18" height="12" rx="2" fill="none" stroke="#eee"/><path d="M13 4v12" stroke="#eee"/></svg>
          <svg class="side-i side-gear" viewBox="0 0 20 20"><circle cx="10" cy="10" r="3" fill="none" stroke="#eee"/><path d="M8 1h4l.6 2.600 2.500-1 2.400 3.400-1.800 2 1.800 2-2.400 3.400-2.500-1L12 19H8l-.6-2.600-2.500 1L2.500 14l1.800-2-1.800-2 2.400-3.400 2.500 1z" fill="none" stroke="#eee" transform="translate(0 -1)"/></svg>
        </aside>
      </div>
    </div>

    <div class="taskbar tb-right">
      <div class="tb-apps">
        <span class="app"><svg class="i24"><use href="#start"/></svg></span>
        <span class="app run"><svg class="i24"><use href="#texp"/></svg></span>
        <span class="app active"><svg class="i24"><use href="#tedge"/></svg></span>
        <span class="app"><svg class="i24"><use href="#tchrome"/></svg></span>
        <span class="app"><svg class="i24"><use href="#tnote"/></svg></span>
        <span class="app"><svg class="i24"><use href="#tfox"/></svg></span>
        <span class="app run"><svg class="i24"><use href="#tcode"/></svg></span>
        <span class="app run"><svg class="i24"><use href="#tchrome"/></svg></span>
        <span class="app run"><svg class="i24"><use href="#txampp"/></svg></span>
        <span class="app run"><svg class="i24" viewBox="0 0 24 24"><path d="M1 3l13-3v24L1 21z" fill="#2b579a"/><rect x="13" y="4" width="10" height="16" fill="#fff"/><path d="M15 7h6M15 10h6M15 13h6M15 16h6" stroke="#2b579a"/><text x="3" y="16" class="word-w">W</text></svg></span>
        <span class="app run"><svg class="i24"><use href="#tpaint"/></svg></span>
      </div>
      <div class="clock clock-r"><span>11:23 AM</span><span>9/25/2023</span></div>
    </div>
    <div class="below"></div>
  </section>
</div>
</body>
</html>
```

FILE: styles.css
```css
* { box-sizing: border-box; }
html, body { margin: 0; padding: 0; background: #000; overflow: hidden; }
body { font-family: Roboto, "DejaVu Sans", sans-serif; font-size: 12px; color: #e6e6e6; }
.defs { display: block; width: 0; height: 0; }
svg { display: block; flex: none; }
hr { margin: 0; border: 0; }
.screen { display: flex; width: 3360px; height: 1080px; }
.monitor { display: flex; flex-direction: column; height: 1080px; }
.mon-left { width: 1920px; }
.mon-right { width: 1440px; }

.i10 { width: 10px; height: 10px; }
.i12 { width: 12px; height: 12px; }
.i14 { width: 14px; height: 14px; }
.i16 { width: 16px; height: 16px; }
.i16f { width: 16px; height: 13px; }
.i17 { width: 17px; height: 18px; }
.i18 { width: 18px; height: 18px; }
.i24 { width: 24px; height: 24px; }
.dim { color: #8a8a8a; }
.ml-auto { margin-left: auto; }

/* explorer */
.explorer { flex: 1; display: flex; flex-direction: column; min-height: 0; background: #191919; }
.ex-title { height: 32px; background: #202020; display: flex; align-items: flex-end; padding-left: 8px; }
.ex-tab { width: 239px; height: 31px; background: #2b2b2b; border-radius: 6px 6px 0 0; display: flex; align-items: center; padding: 0 15px 0 10px; gap: 11px; }
.ex-tab-name { font-size: 12.5px; color: #f0f0f0; }
.ex-newtab { margin: 0 0 10px 19px; }
.winctl { margin-left: auto; align-self: stretch; display: flex; align-items: center; color: #eee; gap: 34px; padding-right: 17px; }
.winctl-dim { color: #666; gap: 33px; padding-right: 22px; }

.ex-tools { height: 55px; background: #2b2b2b; border-bottom: 1px solid #3f3f3f; display: flex; align-items: center; padding-left: 21px; }
.tool { display: flex; align-items: center; font-size: 12.5px; color: #e8e8e8; }
.tool-new { width: 68px; gap: 9px; }
.tool-new .i10 { margin-left: -4px; }
.tool-sep { width: 1px; height: 32px; background: #3d3d3d; flex: none; }
.ex-tools > .tool-sep:first-of-type { margin-left: 9px; }
.tool-icons { width: 292px; padding: 0 18px; display: flex; justify-content: space-between; }
.tool-sort { margin-left: 15px; gap: 8px; width: 90px; }
.tool-view { gap: 9px; width: 78px; }
.tool-more { display: flex; gap: 3px; margin-left: 16px; }
.tool-more i { width: 3px; height: 3px; border-radius: 50%; background: #f0f0f0; }

.ex-addr { height: 54px; display: flex; align-items: center; padding-right: 15px; }
.ex-nav { width: 137px; display: flex; align-items: center; padding-left: 14px; }
.ex-nav svg:nth-child(2) { margin-left: 21px; }
.ex-nav svg:nth-child(3) { margin-left: 18px; }
.ex-nav svg:nth-child(4) { margin-left: 17px; }
.ex-path { width: 1508px; height: 34px; border: 1px solid #3c3c3c; border-radius: 2px; display: flex; align-items: center; padding: 0 10px; background: #1b1b1b; color: #ddd; gap: 5px; }
.ex-path span { margin-left: 3px; font-size: 12.5px; }
.path-refresh { margin-left: 16px; }
.ex-search { width: 248px; height: 34px; margin-left: 12px; border: 1px solid #3c3c3c; border-radius: 2px; display: flex; align-items: center; padding: 0 10px; color: #9a9a9a; font-size: 12px; }

.ex-body { flex: 1; display: flex; min-height: 0; }
.ex-side { width: 167px; padding-top: 1px; border-right: 2px solid #2b2b2b; display: flex; flex-direction: column; }
.nv { height: 32px; display: flex; align-items: center; margin: 0 0 0 2px; width: 162px; border-radius: 3px; color: #e8e8e8; font-size: 12.5px; flex: none; }
.nv-chev { width: 10px; margin-left: 9px; flex: none; }
.nv-ic { width: 16px; height: 16px; margin-left: 13px; margin-right: 5px; }
.nv-pin { width: 12px; height: 12px; margin-left: auto; margin-right: 3px; }
.nv-on { background: #333; }
.nv-sub .nv-chev { margin-left: 18px; }
.nv-sub .nv-ic { width: 14px; height: 14px; margin-left: 13px; margin-right: 6px; }
.nv-sep { height: 1px; background: #333; margin: 16px 9px 15px 10px; width: 146px; flex: none; }

.ex-files { flex: 1; display: flex; align-items: flex-start; gap: 24px; padding: 22px 0 0 25px; }
.file { width: 84px; margin: 0; display: flex; flex-direction: column; align-items: center; }
.folder { width: 84px; height: 66px; }
.file figcaption { margin-top: 17px; font-size: 12.5px; white-space: nowrap; color: #eee; }

.ex-status { height: 23px; background: #1c1c1c; display: flex; align-items: center; padding-left: 14px; font-size: 12.5px; color: #ddd; }
.status-bar { width: 1px; height: 11px; background: #ddd; margin-left: 10px; }
.view-toggle { margin-left: auto; display: flex; padding-right: 7px; gap: 1px; align-self: stretch; align-items: center; }
.vt { width: 19px; height: 22px; display: flex; align-items: center; justify-content: center; background: #6c6c6c; }
.vt:first-child { height: 16px; width: 17px; background: #999; border-radius: 2px; }

/* taskbar */
.taskbar { flex: none; display: flex; align-items: center; border-top: 1px solid #4a4444; background: linear-gradient(90deg, #231a30 0%, #2f1c30 38%, #3a1f20 52%, #471813 68%, #3a1a15 85%, #2d1c18 100%); }
.tb-left { height: 48px; }
.tb-right { height: 47px; }
.tb-apps { display: flex; align-items: center; }
.tb-left .tb-apps { margin-left: 719px; }
.tb-right .tb-apps { margin-left: 478px; }
.app { width: 44px; height: 40px; display: flex; align-items: center; justify-content: center; position: relative; border-radius: 4px; }
.app.run::after { content: ""; position: absolute; left: 20px; bottom: 0; width: 4px; height: 4px; border-radius: 50%; background: #9a9a9a; }
.app.active { background: #37263f; border: 1px solid #44334a; }
.app.active::after { content: ""; position: absolute; left: 12px; bottom: 0; width: 18px; height: 3px; border-radius: 2px; background: #4cc2ff; }
.word-w { font: 700 11px "Liberation Sans", Arial, sans-serif; fill: #fff; }
.tray { margin-left: auto; display: flex; align-items: center; padding-right: 21px; }
.tray-up { margin-right: 22px; }
.tray-lang { font-size: 11.5px; color: #f0f0f0; margin-right: 19px; }
.tray-vol { margin-left: 7px; margin-right: 17px; }
.clock { display: flex; flex-direction: column; align-items: flex-end; gap: 1px; font-size: 12px; line-height: 15px; color: #e8e8e8; }
.notif { width: 15px; height: 15px; margin-left: 7px; border-radius: 50%; background: #4cc2ff; color: #111; font-size: 10px; text-align: center; line-height: 15px; }
.clock-r { margin-left: auto; margin-right: 23px; }
.below { flex: 1; background: #000; }

/* edge */
.edge { height: 853px; flex: none; background: #3b3b3b; display: flex; flex-direction: column; }
.ed-title { height: 32px; flex: none; background: #1f1f1f; display: flex; align-items: flex-end; }
.ed-tabs { margin: 0 16px 9px 17px; }
.ed-tab { width: 240px; height: 32px; background: #3b3b3b; border-radius: 6px 6px 0 0; display: flex; align-items: center; padding: 0 10px 0 13px; }
.ed-fav { width: 11px; height: 18px; }
.ed-tab-name { flex: 1; font-size: 11px; white-space: nowrap; }
.ed-tab .i12 { margin-left: 8px; }
.ed-new { margin: 0 0 9px 11px; color: #eee; }

.ed-tools { height: 34px; flex: none; display: flex; align-items: center; padding-left: 19px; }
.ed-reload { margin-left: 26px; color: #eee; }
.ed-pill { width: 931px; height: 30px; margin-left: 19px; margin-top: 4px; background: #2b2b2b; border-radius: 15px; display: flex; align-items: center; padding: 0 5px 0 19px; }
.ed-lock { width: 12px; height: 16px; }
.ed-url { margin-left: 18px; font-size: 14px; color: #8d8d8d; }
.ed-url b { font-weight: 400; color: #f2f2f2; }
.pill-icons { margin-left: auto; display: flex; }
.cell { width: 44px; height: 30px; display: flex; align-items: center; justify-content: center; flex: none; }
.pill-icons .cell { width: 40px; }
.pill-tr { font-size: 13px; color: #8a8a8a; white-space: nowrap; font-family: Roboto, "Noto Sans CJK JP", sans-serif; }
.pill-tr small { font-size: 8px; vertical-align: super; }
.ed-ext { display: flex; align-items: center; margin-left: 8px; margin-top: 4px; }
.cell-n { width: 42px; }
.ext-sep { width: 1px; height: 22px; background: #5c5c5c; margin: 0 2px; flex: none; }
.edm { margin-left: 0; }
.bing { width: 30px; height: 30px; }

.ed-marks { height: 38px; flex: none; display: flex; align-items: center; padding-left: 14px; font-size: 12px; color: #f0f0f0; }
.bm { display: flex; align-items: center; gap: 8px; margin-right: 15px; white-space: nowrap; }
.bm-t { min-width: 112px; }
.bm-more { margin-left: auto; margin-right: 63px; color: #ccc; }

.ed-main { flex: 1; min-height: 0; display: flex; }
.page { width: 1392px; margin-left: 4px; height: 744px; position: relative; display: flex; flex-direction: column; border-radius: 8px 8px 8px 0; overflow: hidden; background: #7b7b7c; }
.wpbar { height: 24px; flex: none; background: #1d2327; display: flex; align-items: center; padding-left: 4px; font-family: "Liberation Sans", Arial, sans-serif; font-size: 9.5px; color: #d8dadb; white-space: nowrap; }
.wp-site { margin-left: 5px; font-family: "DejaVu Sans", sans-serif; font-size: 9.5px; }
.wp-t { margin-left: 5px; }
.wp-n { margin-left: 5px; }
.wp-dim { margin-left: 5px; color: #8a8f93; }
.wp-gap1 { margin-left: 12px; }
.wp-gap2 { margin-left: 12px; }
.wp-gap3 { margin-left: 11px; }
.wp-gap4 { margin-left: 11px; }
.wp-gap5 { margin-left: 17px; }
.wp-gap6 { margin-left: 12px; }
.wp-gap7 { margin-left: 11px; }
.wp-gap8 { margin-left: 12px; }
.wp-gap9 { margin-left: 12px; }
.wp-badge { width: 14px; height: 14px; margin-left: 4px; border-radius: 50%; background: #d63638; color: #fff; text-align: center; line-height: 14px; font-size: 9px; }
.wp-howdy { margin-left: auto; }
.wp-av { width: 15px; height: 15px; margin-left: 5px; }
.wp-search { margin: 0 7px 0 9px; }

.site-head { height: 65px; flex: none; background: #114769; display: flex; align-items: center; justify-content: space-between; padding: 0 260px 0 222px; }
.site-user { color: #8e9aa3; font: 13px "Liberation Sans", Arial, sans-serif; display: flex; align-items: center; gap: 1px; }
.caret { border: 3px solid transparent; border-top-color: #8e9aa3; margin-top: 3px; }
.site-logo { width: 16px; height: 44px; }
.site-main { height: 366px; flex: none; background: #7b7b7c; display: flex; align-items: flex-start; padding: 36px 219px 0 219px; justify-content: space-between; }
.card { background: #808080; border-radius: 5px; box-shadow: 0 2px 8px rgba(0, 0, 0, .12); }
.card-a { width: 300px; height: 179px; padding-top: 46px; }
.ln { height: 1px; background: #6f6f6f; }
.ln-1 { margin-left: 12px; }
.ln-2 { margin: 53px 0 0 30px; }
.ln-3 { margin-top: 7px; }
.ghost-btn { display: block; margin: 7px 0 0 43px; width: 100px; height: 23px; background: #0a48a8; border-radius: 3px; }
.card-b { width: 600px; height: 312px; margin-top: 1px; padding: 22px 0 0; display: flex; flex-direction: column; align-items: flex-end; }
.ci { width: 20px; height: 20px; margin-right: 11px; }
.ci-cal { margin-top: 13px; }
.ci-mail { margin-top: 35px; }
.ci-out { margin-top: 14px; }
.cb-row { display: flex; width: 60px; margin-right: 3px; font-family: "DejaVu Sans", sans-serif; font-size: 12px; color: #333; }
.cb-row b { width: 18px; }
.cb-row span { margin-right: 4px; white-space: nowrap; }
.cb-head { margin-top: 36px; height: 20px; align-items: center; }
.cb-ln { height: 1px; background: #6f6f6f; width: 300px; margin: 9px 3px 0 0; }
.cb-val { margin-top: 5px; height: 20px; align-items: center; }
.cb-val span { color: #666; }
.cb-ln2 { margin-top: 20px; }

.site-foot { height: 283px; flex: none; background: #114769; padding-top: 38px; }
.foot-row { height: 199px; display: flex; justify-content: space-between; padding: 0 210px 0 212px; }
.zarin { width: 60px; height: 85px; margin-top: 50px; background: #897a00; border-radius: 5px; display: flex; flex-direction: column; align-items: center; padding-top: 9px; color: #14163a; font-family: "DejaVu Sans", sans-serif; }
.zarin-mark { width: 40px; height: 42px; }
.zarin-s { font-size: 6px; line-height: 9px; margin-top: 2px; white-space: nowrap; }
.zarin-b { font-size: 11px; line-height: 16px; font-weight: 700; white-space: nowrap; }
.foot-links { display: flex; flex-direction: column; font-family: "DejaVu Sans", sans-serif; font-size: 10.5px; color: #7f97a8; gap: 9px; }
.foot-links strong { font-size: 11px; color: #8aa0af; line-height: 22px; margin-bottom: -2px; }
.foot-links span { line-height: 16px; }
.foot-ln { height: 1px; background: #0e3a56; margin: 0 201px; }
.page-end { flex: 1; background: #7b7b7c; }

/* modal */
.modal { position: absolute; left: 270px; top: 24px; width: 853px; height: 698px; background: #fff; border-radius: 0 0 6px 6px; overflow: hidden; padding: 0 12px 0 27px; }
.mscroll { position: absolute; left: 3px; top: 0; width: 9px; height: 698px; display: flex; flex-direction: column; align-items: center; }
.ms-up { margin-top: 6px; border: 4px solid transparent; border-top: 0; border-bottom: 6px solid #8a8a8a; }
.ms-thumb { width: 9px; height: 565px; margin-top: 9px; background: #686868; border-radius: 5px; }
.ms-down { margin-top: 97px; border: 4px solid transparent; border-bottom: 0; border-top: 6px solid #8a8a8a; }
.mtop { height: 45px; display: flex; align-items: flex-start; justify-content: space-between; padding: 10px 12px 0 9px; }
.printbtn { width: 35px; height: 29px; background: #6c757d; border-radius: 4px; display: flex; align-items: center; justify-content: center; }
.mclose { width: 14px; height: 14px; margin-top: 2px; color: #555; }

.inv { width: 814px; table-layout: fixed; border-collapse: collapse; font-size: 11px; line-height: 21px; color: #555; }
.num { font-size: 12px; }
.c1 { width: 118px; } .c2 { width: 60px; } .c3 { width: 60px; } .c4 { width: 67px; }
.c5 { width: 109px; } .c6 { width: 91px; } .c7 { width: 134px; } .c8 { width: 175px; }
.inv td, .inv th { border: 1px solid #dfe3e8; padding: 6px 6px 0; vertical-align: top; text-align: right; }
.inv th { text-align: center; color: #333; font-weight: 700; vertical-align: middle; padding: 0 6px; }
.inv .ctr { text-align: center; }
.inv .bot { vertical-align: bottom; padding-bottom: 7px; }
.inv .dark { color: #333; }
.inv .inv-logo { padding: 0; vertical-align: middle; }
.inv-mark { width: 27px; height: 45px; margin: 0 auto; }
.r58 { height: 58px; } .r56 { height: 56px; } .r35 { height: 35px; } .r34 { height: 34px; } .r72 { height: 72px; }

/* edge side rail */
.ed-side { width: 44px; flex: none; display: flex; flex-direction: column; align-items: center; height: 744px; }
.side-top { margin-top: -24px; margin-bottom: 24px; }
.side-i { width: 20px; height: 20px; margin-bottom: 20px; color: #eee; }
.side-plus { width: 16px; height: 16px; margin: 5px 0 0; }
.side-sep { width: 28px; height: 1px; background: #5a5a5a; margin: 384px 0 12px; }
.side-gear { margin-top: 0; }
```
